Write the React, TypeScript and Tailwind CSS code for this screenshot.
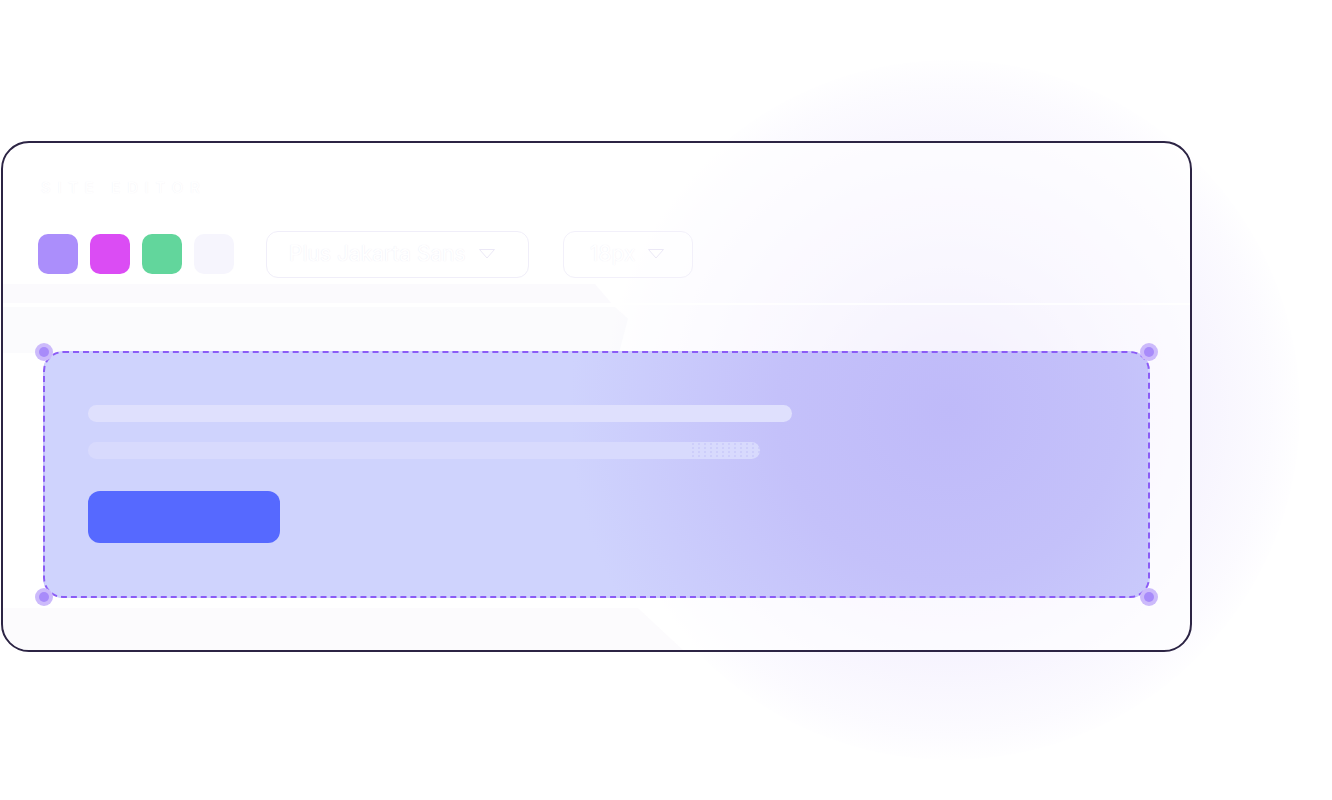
import React from "react";

const swatches = ["bg-[#ab8efb]", "bg-[#db4cf4]", "bg-[#62d69c]", "bg-[#f6f5fd]"];

function Handle() {
  return (
    <span className="flex h-[18px] w-[18px] items-center justify-center rounded-full bg-[#ccbafb]">
      <span className="h-[10px] w-[10px] rounded-full bg-[#a88bfa]" />
    </span>
  );
}

function Caret() {
  return (
    <svg width="18" height="12" viewBox="0 0 18 12" className="ml-3">
      <path d="M1.5 1.5h15L9 10z" fill="#ffffff" stroke="#ebe8f6" strokeWidth="1" strokeLinejoin="round" />
    </svg>
  );
}

export default function App() {
  return (
    <div className="relative h-[800px] w-[1332px] overflow-hidden bg-white font-['Inter',sans-serif]">
      {/* glow behind the card */}
      <div className="absolute left-[600px] top-[60px] h-[700px] w-[700px] rounded-full bg-[radial-gradient(circle_at_center,rgba(150,120,245,0.28)_0%,rgba(160,130,245,0.14)_35%,rgba(190,170,250,0.05)_65%,rgba(255,255,255,0)_72%)]" />

      <div className="relative pl-[1px] pt-[141px]">
        <div className="relative h-[511px] w-[1191px] overflow-hidden rounded-[28px] border-2 border-[#2c2444] bg-white/60">
          {/* faint slanted panels */}
          <div className="absolute left-0 top-[141px] h-[21px] w-[610px] bg-[#f4f3fa]/40 [clip-path:polygon(0_0,592px_0,100%_100%,0_100%)]" />
          <div className="absolute left-0 top-[164px] h-[46px] w-[625px] bg-[#f5f4fa]/40 [clip-path:polygon(0_0,612px_0,100%_25%,616px_100%,0_100%)]" />
          <div className="absolute bottom-0 left-0 h-[42px] w-[680px] bg-[#f7f6fb]/40 [clip-path:polygon(0_0,635px_0,100%_100%,0_100%)]" />

          <div className="relative flex flex-col">
            <div className="px-[38px] pt-[34px] text-[15px] font-medium uppercase tracking-[0.45em] text-white [text-shadow:0_0_1px_rgba(180,170,210,0.2)]">
              Site Editor
            </div>

            <div className="mt-[31px] flex items-center px-[35px]">
              <div className="flex gap-3">
                {swatches.map((c) => (
                  <div key={c} className={`h-10 w-10 rounded-[10px] ${c}`} />
                ))}
              </div>
              <div className="ml-8 flex h-[47px] w-[263px] items-center rounded-xl border border-[#f0eef9] bg-white/50 pl-[22px] text-[21px] text-white [text-shadow:0_0_1px_rgba(130,110,190,0.18)]">
                Plus Jakarta Sans
                <Caret />
              </div>
              <div className="ml-[34px] flex h-[47px] w-[130px] items-center rounded-xl border border-[#f2f0fa] bg-white/40 pl-[26px] text-[21px] text-white [text-shadow:0_0_1px_rgba(130,110,190,0.15)]">
                18px
                <Caret />
              </div>
            </div>

            <div className="mt-[25px] h-[2px] w-full bg-white/90" />

            <div className="relative ml-[40px] mt-[46px] h-[247px] w-[1107px] rounded-[20px] border-2 border-dashed border-[#8b5cf6] bg-[#cfd3fd] bg-[radial-gradient(circle_380px_at_82%_24%,#bfbaf9_0%,#c4c1fa_45%,#cfd3fd_100%)]">
              <div className="absolute -left-[10px] -top-[10px]"><Handle /></div>
              <div className="absolute -right-[10px] -top-[10px]"><Handle /></div>
              <div className="absolute -bottom-[10px] -left-[10px]"><Handle /></div>
              <div className="absolute -bottom-[10px] -right-[10px]"><Handle /></div>

              <div className="flex flex-col pl-[43px] pt-[52px]">
                <div className="h-[17px] w-[704px] rounded-full bg-[#dfe0fd]" />
                <div className="relative mt-[20px] h-[17px] w-[672px] overflow-hidden rounded-full bg-[#d8dafd]">
                  <div className="absolute right-0 top-0 h-full w-[70px] bg-[radial-gradient(#aaa4f2_0.7px,transparent_1px)] bg-[length:6px_4px] opacity-70" />
                </div>
                <div className="mt-[32px] h-[52px] w-[192px] rounded-xl bg-[#5669ff]" />
              </div>
            </div>
          </div>
        </div>
      </div>
    </div>
  );
}
